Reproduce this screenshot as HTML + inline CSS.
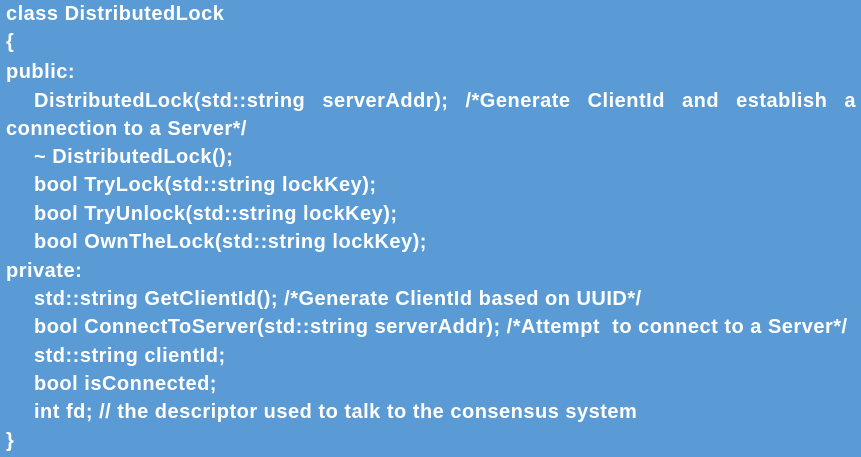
<!DOCTYPE html>
<html><head><meta charset="utf-8"><style>
html,body{margin:0;padding:0;}
body{width:861px;height:457px;background:#5B9BD5;overflow:hidden;font-family:"Liberation Sans",sans-serif;font-weight:bold;color:#fff;font-size:20px;letter-spacing:0.5px;}
.l{position:absolute;left:6px;white-space:pre;line-height:20px;}
.i{left:34px;}
.j{display:flex;justify-content:space-between;width:822px;}
</style></head><body>
<div class="l" style="top:4px">class DistributedLock</div>
<div class="l" style="top:32px">{</div>
<div class="l" style="top:62px">public:</div>
<div class="l i j" style="top:91px"><span>DistributedLock(std::string</span><span>serverAddr);</span><span>/*Generate</span><span>ClientId</span><span>and</span><span>establish</span><span>a</span></div>
<div class="l" style="top:119px">connection to a Server*/</div>
<div class="l i" style="top:147px">~ DistributedLock();</div>
<div class="l i" style="top:175px">bool TryLock(std::string lockKey);</div>
<div class="l i" style="top:204px">bool TryUnlock(std::string lockKey);</div>
<div class="l i" style="top:232px">bool OwnTheLock(std::string lockKey);</div>
<div class="l" style="top:261px">private:</div>
<div class="l i" style="top:289px">std::string GetClientId(); /*Generate ClientId based on UUID*/</div>
<div class="l i" style="top:317px">bool ConnectToServer(std::string serverAddr); /*Attempt  to connect to a Server*/</div>
<div class="l i" style="top:346px">std::string clientId;</div>
<div class="l i" style="top:374px">bool isConnected;</div>
<div class="l i" style="top:402px">int fd; // the descriptor used to talk to the consensus system</div>
<div class="l" style="top:431px">}</div>
</body></html>
